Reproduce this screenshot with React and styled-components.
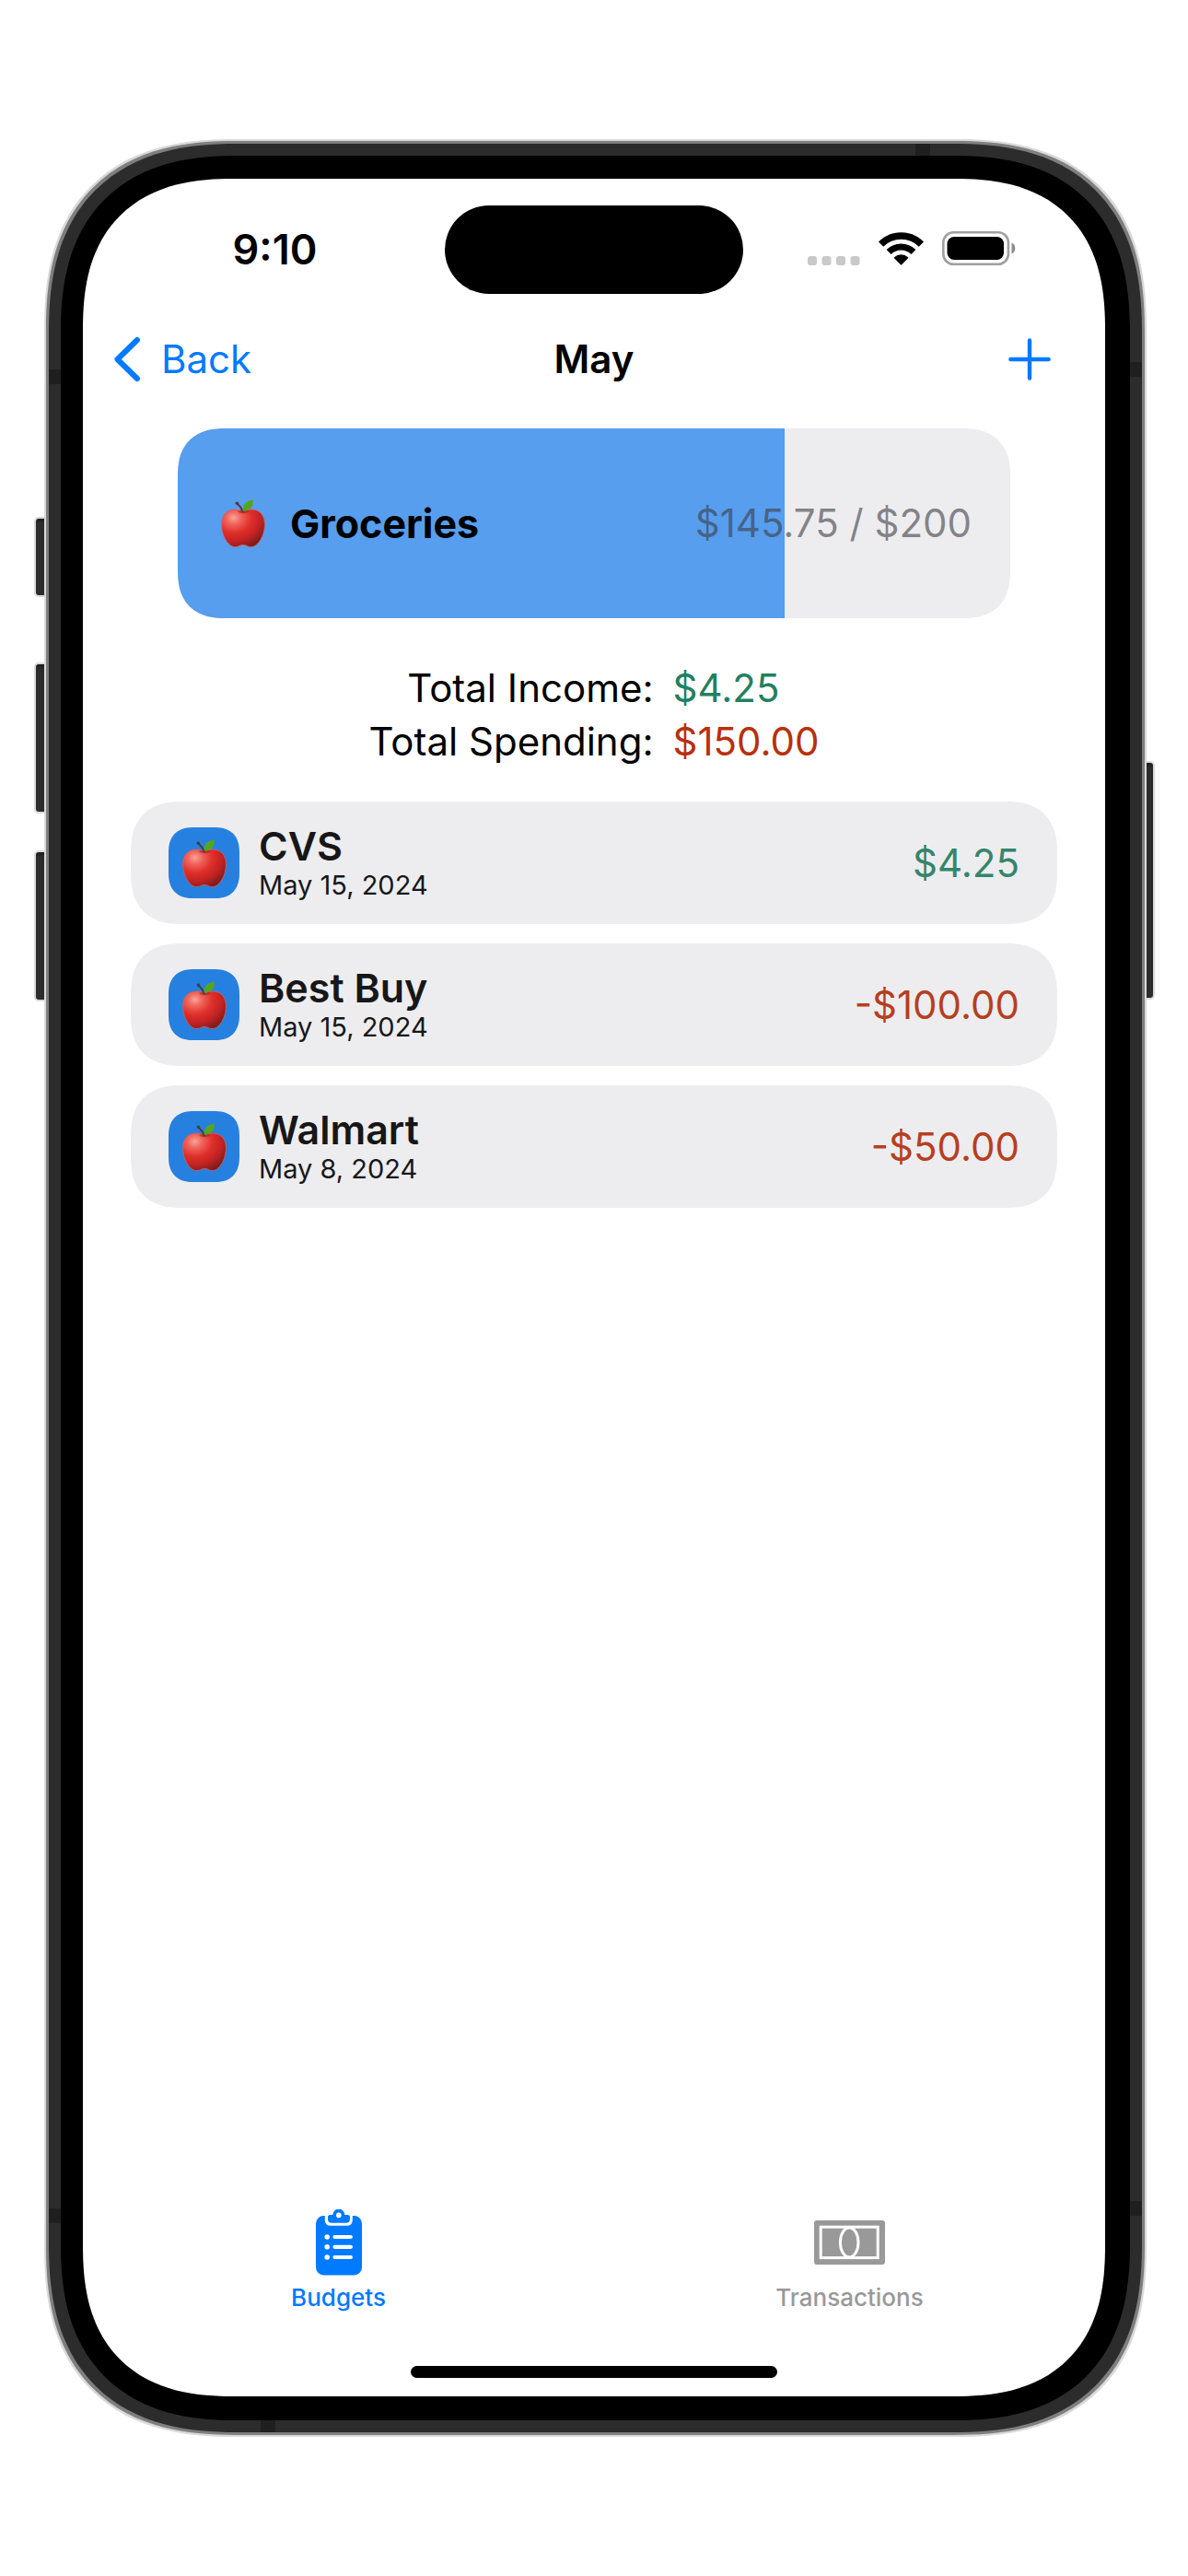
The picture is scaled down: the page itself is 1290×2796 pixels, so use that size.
import React, { useId } from "react";
import styled, { createGlobalStyle, css } from "styled-components";

const color = {
  blue: "#007aff",
  surface: "#ededef",
  fill: "#579eee",
  tile: "#2680e0",
  label: "#171718",
  muted: "#999999",
  secondary: "rgba(60, 60, 67, 0.6)",
  bezel: "#2c2c2c",
  band: "#1f1f1f",
};

const GlobalStyle = createGlobalStyle`
  *, *::before, *::after { box-sizing: border-box; }
  body {
    margin: 0;
    background: #fff;
    color: #000;
    font-family: Inter, "Liberation Sans", sans-serif;
    font-size: 42px;
    line-height: 58px;
  }
  h1, h2, h3, p, ul, dl, dd { margin: 0; padding: 0; font-size: inherit; }
  ul { list-style: none; }
  svg { display: block; flex: none; }
`;

const rounded = (size, plain) => css`
  border-radius: ${plain}px;
  @supports (corner-shape: superellipse(1.3)) {
    border-radius: ${size}px;
    corner-shape: superellipse(1.3);
  }
`;

const Page = styled.div`
  display: flex;
  justify-content: center;
  min-height: 100vh;
  padding: 156px 50px 156px 53px;
`;

const Device = styled.div`
  position: relative;
  display: flex;
  width: 100%;
  max-width: 1187px;
`;

const Bezel = styled.div`
  position: relative;
  display: flex;
  flex: 1;
  border: 13px solid ${color.bezel};
  background: #000;
  padding: 25px 27px 26px 24px;
  box-shadow: 0 0 0 3px #7f7f7f, 0 0 0 5px #dadada;
  ${rounded(206, 180)}
`;

const SideButton = styled.span`
  position: absolute;
  ${(p) => (p.$side === "left" ? "left: -14px;" : "right: -12px;")}
  top: ${(p) => p.$top}px;
  width: 30px;
  height: ${(p) => p.$height}px;
  border-radius: 3px;
  background: linear-gradient(#1c1c1c, ${color.bezel} 5px);
  box-shadow: 0 0 0 2px #dadada;
`;

const Band = styled.span`
  position: absolute;
  background: ${color.band};
  ${(p) =>
    p.$edge === "left" || p.$edge === "right"
      ? "width: 13px; height: 16px;"
      : "width: 16px; height: 13px;"}
  ${(p) => p.$edge}: 0;
  ${(p) => p.$from}: ${(p) => p.$at}px;
`;

const Screen = styled.div`
  display: flex;
  flex-direction: column;
  flex: 1;
  min-width: 0;
  background: #fff;
  overflow: hidden;
  ${rounded(164, 140)}
`;

const StatusBar = styled.header`
  display: grid;
  grid-template-columns: 1fr 324px 1fr;
  align-items: center;
  padding-top: 29px;
`;

const Island = styled.div`
  height: 96px;
  border-radius: 48px;
  background: #000;
`;

const Clock = styled.time`
  padding-left: 24px;
  text-align: center;
  font-size: 45px;
  font-weight: 600;
`;

const StatusIcons = styled.div`
  display: flex;
  justify-content: center;
  align-items: flex-end;
  gap: 20px;
  padding: 0 28px 4px 0;
`;

const NavBar = styled.nav`
  display: grid;
  grid-template-columns: 1fr auto 1fr;
  align-items: center;
  height: 142px;
  padding: 0 33px;
`;

const NavButton = styled.button`
  display: flex;
  align-items: center;
  gap: 22px;
  justify-self: ${(p) => p.$align};
  padding: ${(p) => (p.$align === "end" ? "0 25px" : "0")};
  border: 0;
  background: none;
  color: ${color.blue};
  font: inherit;
  cursor: pointer;
`;

const Title = styled.h1`
  font-weight: 600;
`;

const Main = styled.main`
  flex: 1;
  padding: 4px 52px 0;
`;

const BudgetCard = styled.section`
  position: relative;
  display: flex;
  align-items: center;
  gap: 27px;
  min-height: 206px;
  margin: 0 51px;
  padding: 0 42px 0 47px;
  background: ${color.surface};
  overflow: hidden;
  ${rounded(52, 44)}
`;

const Fill = styled.div`
  position: absolute;
  inset: 0 auto 0 0;
  background: ${color.fill};
`;

const CardIcon = styled.span`
  position: relative;
`;

const CardName = styled.h2`
  position: relative;
  flex: 1;
  font-size: 43px;
  font-weight: 700;
`;

const CardAmount = styled.p`
  position: relative;
  color: ${color.secondary};
`;

const Totals = styled.dl`
  display: grid;
  grid-template-columns: auto auto;
  justify-content: center;
  column-gap: 21px;
  margin: 47px 0 36px;
`;

const TotalLabel = styled.dt`
  text-align: right;
`;

const TotalValue = styled.dd`
  color: ${(p) => (p.$income ? "#23805f" : "#b8300c")};
`;

const List = styled.ul`
  display: flex;
  flex-direction: column;
  gap: 21px;
`;

const Row = styled.li`
  display: flex;
  align-items: center;
  gap: 21px;
  padding: 26px 41px;
  background: ${color.surface};
  color: ${color.label};
  ${rounded(56, 48)}
`;

const Tile = styled.span`
  display: flex;
  align-items: center;
  justify-content: center;
  width: 77px;
  height: 77px;
  background: ${color.tile};
  ${rounded(28, 24)}
`;

const RowText = styled.div`
  display: flex;
  flex-direction: column;
  flex: 1;
  gap: 5px;
`;

const RowName = styled.h3`
  font-size: 43px;
  font-weight: 600;
  line-height: 44px;
`;

const RowDate = styled.time`
  font-size: 29px;
  line-height: 32px;
`;

const RowAmount = styled.span`
  color: ${(p) => (p.$income ? "#35856b" : "#b63f1f")};
`;

const TabBar = styled.nav`
  display: grid;
  grid-template-columns: 1fr 1fr;
  padding-bottom: 59px;
`;

const Tab = styled.button`
  display: flex;
  flex-direction: column;
  align-items: center;
  gap: 9px;
  padding: 0;
  border: 0;
  background: none;
  color: ${(p) => (p.$active ? color.blue : color.muted)};
  font: inherit;
  font-size: 26px;
  font-weight: 500;
  line-height: 30px;
  cursor: pointer;
`;

const TabIcon = styled.span`
  display: flex;
  align-items: center;
  height: 72px;
`;

const HomeIndicator = styled.div`
  width: 398px;
  height: 13px;
  margin: 0 auto 20px;
  border-radius: 7px;
  background: #000;
`;

function Apple() {
  const id = useId();
  return (
    <svg width="48" height="52" viewBox="0 0 48 52" aria-hidden="true">
      <defs>
        <radialGradient id={id + "b"} cx="0.28" cy="0.22" r="0.85">
          <stop offset="0" stopColor="#f9a59a" />
          <stop offset="0.2" stopColor="#f0655c" />
          <stop offset="0.48" stopColor="#e02f2b" />
          <stop offset="0.75" stopColor="#c02222" />
          <stop offset="1" stopColor="#7c1d1c" />
        </radialGradient>
        <linearGradient id={id + "l"} x1="0" y1="0" x2="1" y2="1">
          <stop offset="0" stopColor="#4fae22" />
          <stop offset="1" stopColor="#5c9c1c" />
        </linearGradient>
      </defs>
      <path
        d="M24 13.5C20 10.8 15.5 10.5 11 11.6C4 13.3 0.6 19.5 0.6 27C0.6 37 5 46 10.5 50C14.5 52.6 18 51.3 20.5 50.2C22.8 49.1 25.2 49.1 27.5 50.2C30 51.3 33.5 52.6 37.5 50C43 46 47.4 37 47.4 27C47.4 19.5 44 13.3 37 11.6C32.5 10.5 28 10.8 24 13.5Z"
        fill={`url(#${id}b)`}
        stroke="#d8615f"
        strokeWidth="0.8"
      />
      <path d="M18 13C21 11.3 27.5 11.2 31 13C28 15 26 15.4 24 15.3C21.5 15.2 19.5 14.5 18 13Z" fill="#a51f1c" opacity="0.6" />
      <path d="M24 13.5C22.3 9.5 20 6.5 17.2 4.2" fill="none" stroke="#4c3a3d" strokeWidth="2" strokeLinecap="round" />
      <circle cx="17.4" cy="4.3" r="1.8" fill="#4c3a3d" />
      <path d="M23.8 12.8C22.8 5.8 27.5 1.2 34.6 0.4C35.8 7 31.5 12.2 23.8 12.8Z" fill={`url(#${id}l)`} />
    </svg>
  );
}

function SignalDots() {
  return (
    <svg width="57" height="10" viewBox="0 0 57 10" fill="#c9c9c9" aria-hidden="true">
      {[0, 15.5, 31, 46.5].map((x) => (
        <rect key={x} x={x} width="10" height="10" rx="3" />
      ))}
    </svg>
  );
}

function Wifi() {
  return (
    <svg width="49" height="36" viewBox="0 0 49 36" fill="none" stroke="#000" aria-label="Wi-Fi">
      <path d="M2.6 13.1A31 31 0 0 1 46.4 13.1" strokeWidth="7.4" />
      <path d="M11.1 21.6A19 19 0 0 1 37.9 21.6" strokeWidth="7" />
      <path d="M24.5 34.8L17.5 27.7A10.5 10.5 0 0 1 31.5 27.7Z" fill="#000" strokeWidth="1.5" strokeLinejoin="round" />
    </svg>
  );
}

function Battery() {
  return (
    <svg width="80" height="37" viewBox="0 0 80 37" aria-label="Battery full">
      <rect x="1.3" y="1.3" width="70.6" height="34.4" rx="11" fill="none" stroke="#a0a0a0" strokeWidth="2.6" />
      <rect x="5.5" y="6" width="61.5" height="25" rx="7.5" fill="#000" />
      <path d="M75.5 12.5C80.5 14 80.5 23 75.5 24.5Z" fill="#8c8c8c" />
    </svg>
  );
}

function Chevron() {
  return (
    <svg width="30" height="50" viewBox="0 0 30 50" fill="none" stroke="currentColor" strokeWidth="6" strokeLinecap="round" strokeLinejoin="round" aria-hidden="true">
      <path d="M26 4L4.5 25L26 46" />
    </svg>
  );
}

function Plus() {
  return (
    <svg width="48" height="48" viewBox="0 0 48 48" fill="none" stroke="currentColor" strokeWidth="4.4" strokeLinecap="round" aria-hidden="true">
      <path d="M24 3.4V44.6M3.4 24H44.6" />
    </svg>
  );
}

function Clipboard() {
  return (
    <svg width="50" height="72" viewBox="0 0 50 72" aria-hidden="true">
      <rect y="7" width="50" height="64.5" rx="8.5" fill="currentColor" />
      <path d="M9.8 6H39.8V11.5Q39.8 17.8 33.5 17.8H16.1Q9.8 17.8 9.8 11.5Z" fill="#fff" />
      <path
        d="M18.4 6A6.4 6.4 0 0 1 31.2 6H34.5Q37 6 37 8.5V10.5Q37 14.8 32.7 14.8H17.3Q13 14.8 13 10.5V8.5Q13 6 15.5 6Z"
        fill="currentColor"
      />
      <circle cx="24.8" cy="6.4" r="2.8" fill="#fff" />
      {[30, 40.8, 52].map((y) => (
        <g key={y} fill="#fff">
          <circle cx="12.2" cy={y} r="2.8" />
          <rect x="18.4" y={y - 2.1} width="21.6" height="4.2" rx="2.1" />
        </g>
      ))}
    </svg>
  );
}

function Banknote() {
  return (
    <svg width="77" height="48" viewBox="0 0 77 48" aria-hidden="true">
      <rect width="77" height="48" rx="3" fill="currentColor" />
      <rect x="7.2" y="7.2" width="62" height="33.4" fill="none" stroke="#fff" strokeWidth="3" />
      <ellipse cx="38.2" cy="23.9" rx="9.8" ry="16" fill="currentColor" stroke="#fff" strokeWidth="3" />
    </svg>
  );
}

const budget = { name: "Groceries", spent: 145.75, limit: 200 };

const transactions = [
  { name: "CVS", iso: "2024-05-15", date: "May 15, 2024", amount: "$4.25", income: true },
  { name: "Best Buy", iso: "2024-05-15", date: "May 15, 2024", amount: "-$100.00" },
  { name: "Walmart", iso: "2024-05-08", date: "May 8, 2024", amount: "-$50.00" },
];

export default function App() {
  return (
    <>
      <GlobalStyle />
      <Page>
        <Device>
          <SideButton $side="left" $top={407} $height={83} />
          <SideButton $side="left" $top={565} $height={160} />
          <SideButton $side="left" $top={769} $height={160} />
          <SideButton $side="right" $top={672} $height={255} />
          <Bezel>
            <Screen>
              <StatusBar>
                <Clock>9:10</Clock>
                <Island />
                <StatusIcons>
                  <SignalDots />
                  <Wifi />
                  <Battery />
                </StatusIcons>
              </StatusBar>
              <NavBar>
                <NavButton type="button" $align="start">
                  <Chevron />
                  Back
                </NavButton>
                <Title>May</Title>
                <NavButton type="button" $align="end" aria-label="Add transaction">
                  <Plus />
                </NavButton>
              </NavBar>
              <Main>
                <BudgetCard>
                  <Fill style={{ width: `${(budget.spent / budget.limit) * 100}%` }} />
                  <CardIcon>
                    <Apple />
                  </CardIcon>
                  <CardName>{budget.name}</CardName>
                  <CardAmount>{`$${budget.spent} / $${budget.limit}`}</CardAmount>
                </BudgetCard>
                <Totals>
                  <TotalLabel>Total Income:</TotalLabel>
                  <TotalValue $income>$4.25</TotalValue>
                  <TotalLabel>Total Spending:</TotalLabel>
                  <TotalValue>$150.00</TotalValue>
                </Totals>
                <List>
                  {transactions.map((t) => (
                    <Row key={t.name}>
                      <Tile>
                        <Apple />
                      </Tile>
                      <RowText>
                        <RowName>{t.name}</RowName>
                        <RowDate dateTime={t.iso}>{t.date}</RowDate>
                      </RowText>
                      <RowAmount $income={t.income}>{t.amount}</RowAmount>
                    </Row>
                  ))}
                </List>
              </Main>
              <TabBar>
                <Tab type="button" $active aria-current="page">
                  <TabIcon>
                    <Clipboard />
                  </TabIcon>
                  Budgets
                </Tab>
                <Tab type="button">
                  <TabIcon>
                    <Banknote />
                  </TabIcon>
                  Transactions
                </Tab>
              </TabBar>
              <HomeIndicator />
            </Screen>
          </Bezel>
          <Band $edge="top" $from="right" $at={230} />
          <Band $edge="bottom" $from="left" $at={230} />
          <Band $edge="left" $from="top" $at={245} />
          <Band $edge="left" $from="bottom" $at={227} />
          <Band $edge="right" $from="top" $at={237} />
          <Band $edge="right" $from="bottom" $at={235} />
        </Device>
      </Page>
    </>
  );
}
